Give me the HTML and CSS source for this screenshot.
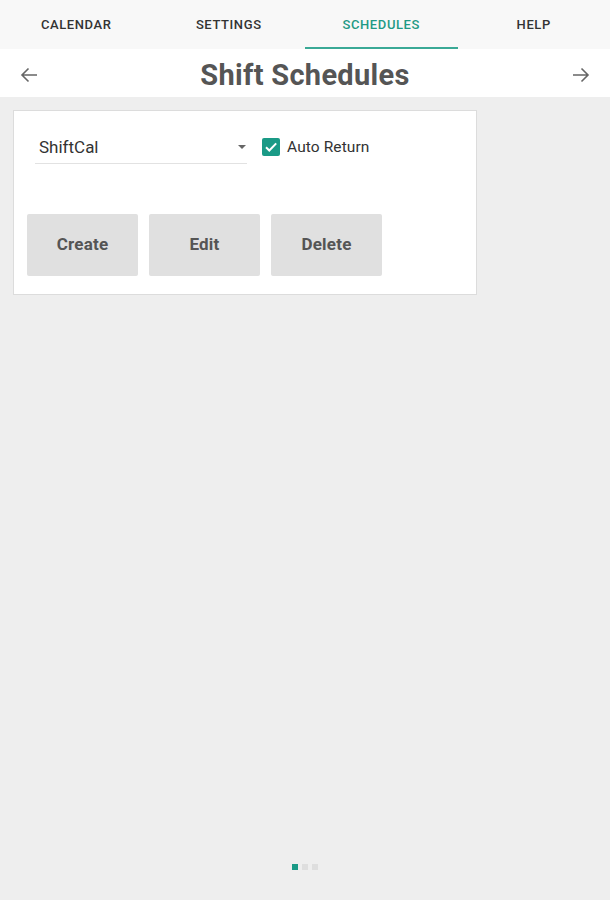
FILE: index.html
```html
<!DOCTYPE html>
<html>
<head>
<meta charset="utf-8">
<link rel="stylesheet" href="styles.css">
</head>
<body>
<div class="app">
  <nav class="tabs">
    <div class="tab">CALENDAR</div>
    <div class="tab">SETTINGS</div>
    <div class="tab active">SCHEDULES</div>
    <div class="tab">HELP</div>
  </nav>
  <header class="titlebar">
    <svg class="arrow" width="18" height="16" viewBox="0 0 18 16"><path d="M17 8H2M8.5 1.5L2 8l6.5 6.5" fill="none" stroke="#666" stroke-width="1.6"/></svg>
    <h1 class="title">Shift Schedules</h1>
    <svg class="arrow" width="18" height="16" viewBox="0 0 18 16"><path d="M1 8h15M9.5 1.5L16 8l-6.5 6.5" fill="none" stroke="#666" stroke-width="1.6"/></svg>
  </header>
  <main class="content">
    <section class="card">
      <div class="row">
        <div class="spinner">
          <span class="spin-text">ShiftCal</span>
          <svg class="caret" width="10" height="6" viewBox="0 0 10 6"><path d="M1 1h8L5 5z" fill="#666"/></svg>
        </div>
        <label class="check">
          <span class="box"><svg width="18" height="18" viewBox="0 0 18 18"><path d="M4 9.2l3.3 3.3L14.2 5.4" fill="none" stroke="#fff" stroke-width="2"/></svg></span>
          <span class="check-label">Auto Return</span>
        </label>
      </div>
      <div class="buttons">
        <button class="btn">Create</button>
        <button class="btn">Edit</button>
        <button class="btn">Delete</button>
      </div>
    </section>
    <div class="dots">
      <span class="dot on"></span><span class="dot"></span><span class="dot"></span>
    </div>
  </main>
</div>
</body>
</html>
```
FILE: styles.css
```css
* { box-sizing: border-box; }
html, body { margin: 0; padding: 0; }
body {
  font-family: Roboto, "Liberation Sans", sans-serif;
  background: #eeeeee;
  width: 610px;
  height: 900px;
  overflow: hidden;
}
.app { display: flex; flex-direction: column; height: 900px; }
.tabs {
  display: grid;
  grid-template-columns: repeat(4, 1fr);
  height: 49px;
  background: #f8f8f8;
}
.tab {
  display: flex;
  align-items: center;
  justify-content: center;
  font-size: 13px;
  font-weight: 500;
  color: #333;
  letter-spacing: 0.6px;
  padding-top: 1px;
  border-bottom: 2px solid transparent;
}
.tab.active { color: #1f9a85; border-bottom-color: #3aa996; }
.titlebar {
  display: flex;
  align-items: center;
  justify-content: space-between;
  height: 48px;
  background: #ffffff;
  padding: 3px 20px 0 20px;
}
.title {
  margin: 0;
  font-size: 29px;
  font-weight: 700;
  color: #555;
  letter-spacing: 0.3px;
}
.content {
  flex: 1;
  display: flex;
  flex-direction: column;
  justify-content: space-between;
  padding: 13px 0 30px 13px;
}
.card {
  width: 464px;
  height: 185px;
  background: #fff;
  border: 1.5px solid #dcdcdc;
  padding: 24px 0 0 13px;
}
.row { display: flex; align-items: center; }
.spinner {
  width: 212px;
  margin-left: 8px;
  height: 29px;
  border-bottom: 1.5px solid #e2e2e2;
  display: flex;
  align-items: center;
  justify-content: space-between;
  padding: 0 0 4px 4px;
}
.spin-text { font-size: 17px; color: #333; }
.check { display: flex; align-items: center; margin-left: 15px; margin-top: -5px; }
.box {
  width: 18px; height: 18px;
  background: #1a9a86;
  border-radius: 2px;
  display: flex;
}
.check-label { margin-left: 7px; font-size: 15.5px; color: #333; letter-spacing: 0.1px; }
.buttons { display: flex; gap: 11px; margin-top: 50px; }
.btn {
  width: 111px;
  height: 62px;
  background: #e0e0e0;
  border: none;
  border-radius: 2px;
  font-family: Roboto, "Liberation Sans", sans-serif;
  font-size: 17px;
  font-weight: 700;
  color: #555;
  padding: 0 0 3px 0;
  letter-spacing: 0.2px;
}
.dots { display: flex; justify-content: center; gap: 4px; padding-right: 13px; }
.dot { width: 6px; height: 6px; background: #dedede; }
.dot.on { background: #1a9a86; }
```
